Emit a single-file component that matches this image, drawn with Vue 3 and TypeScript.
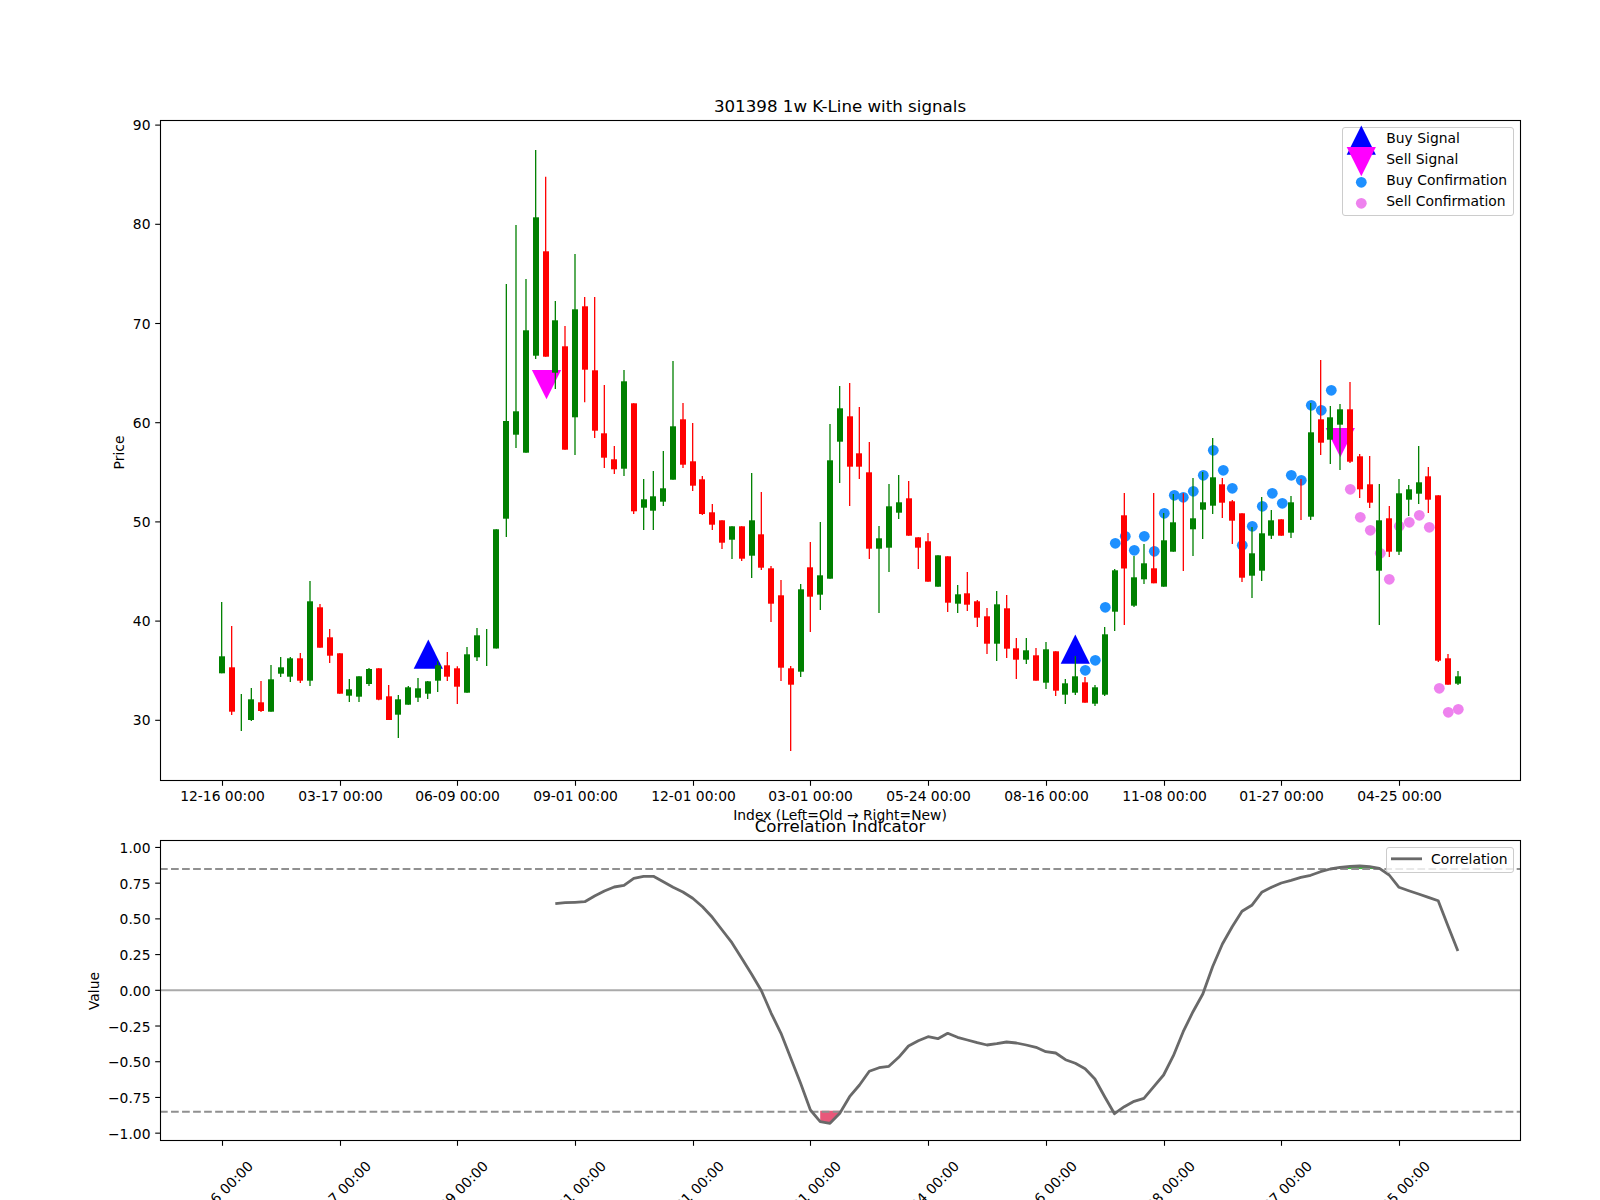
<script setup lang="ts">
type Candle = [string, number, number, number, number]

// colour, wick top, body top, body bottom, wick bottom (image pixels)
const raw: Candle[] = [
  ['g',602,656.3,673.3,673.3],['r',626,667.3,711.7,715],['g',694,0,0,731],['g',688,699.3,720,721],
  ['r',681,702.3,711,712],['g',665,679.3,711.7,711.7],['g',657,667.3,673.7,677],['g',657,658.3,676.7,682],
  ['r',653,658.3,680.7,683],['g',581,601.3,680.7,686],['r',604,607.3,647.7,647.7],['r',629,637.3,655.7,663],
  ['r',653.3,653.3,693.7,693.7],['g',679,689.3,695.7,702],['g',676.3,676.3,696.7,702],['g',668,669,684,686],
  ['r',668.3,668.3,699.7,700.3],['r',685,696.3,720,720],['g',695,699.3,714.7,738],['g',686,687.3,704.7,704.7],
  ['g',678,688.3,697.7,702],['g',681,681.3,693.7,699],['g',661.3,665.3,680.7,692],['r',652,665.3,676.7,681],
  ['r',666.3,668.3,686.7,704],['g',647,654.3,692.7,692.7],['g',628,635.3,657.3,661],['g',629,0,0,666],
  ['g',529.3,529.3,648.5,648.5],['g',284,421,518.7,537],['g',225,411.3,434.7,448],['g',279,330.3,452.7,452.7],
  ['g',150,217.3,355.7,359],['r',176.7,251.3,356.7,356.7],['g',301,320.3,372.7,389],['r',326,346.3,449.7,449.7],
  ['g',254,309.3,417.3,455],['r',297,306.3,369.7,402.3],['r',297,370.3,430.7,438],['r',385,433.3,457.7,468],
  ['r',446,459.3,469.3,474],['g',370,381.3,468.7,476],['r',403.3,403.3,511.3,514],['g',479,499.3,507.7,530],
  ['g',471,496.3,510.7,530],['g',451,488.3,501.7,506],['g',361,426.3,479.7,479.7],['r',403,419.3,464.7,468],
  ['r',423,461.3,485.7,491],['r',476,479.3,514,515],['r',504,512.3,524.7,530],['r',520.3,520.3,542.7,549],
  ['g',526.3,526.3,539.7,559],['r',526.3,526.3,558.7,561],['g',473,520.3,555.7,578],['r',492,534.3,567.7,570],
  ['r',566,568.3,603.7,622],['r',580,595.3,667.7,681],['r',666,668.3,684.7,751],['g',584,589.3,671.7,677],
  ['r',542,567.3,596.7,632],['g',522,575.3,594.7,610],['g',424,460.3,578.7,578.7],['g',386,408.3,441.7,483],
  ['r',383,416.3,466.7,506],['r',407,453.3,466.7,479],['r',442,472.3,548.7,559],['g',526,538.3,548.7,613],
  ['g',484,506.3,547.7,572],['g',475,502.3,512.7,519],['r',481,498.3,535.7,535.7],['r',537.3,537.3,547.7,569],
  ['r',533,541.3,581.7,581.7],['g',555.3,555.3,586.7,586.7],['r',556.3,556.3,602.7,612],['g',585,594.3,603.7,613],
  ['r',572,593.3,604.7,611],['r',600,601.3,617.7,627],['r',608,616.3,643.7,654],['g',591,604.3,643.7,661],
  ['r',595,608.3,648.7,658],['r',638,648.3,659.7,679],['g',638,650.3,659.7,664],['r',648,655.3,680.7,680.7],
  ['g',642,649.3,682.7,689],['r',651.3,651.3,690.7,696],['g',679,683.3,694.7,704],['g',656,676.3,692.7,695],
  ['r',677,682.3,702.7,702.7],['g',685,687.3,703.7,706],['g',627,634.3,694.7,696],['g',569,570.3,611.7,631],
  ['r',493,515.3,568.5,625],['g',556,577.3,605.7,607],['g',544,563.3,579.3,584],['r',493,568.3,583.3,583.3],
  ['g',513,540.3,586.7,586.7],['g',494,522.3,551.7,551.7],['r',493.3,0,0,571],['g',478,518.3,529.3,556],
  ['g',472,502.3,509.7,539],['g',438,477.3,505.7,514],['r',478,484.3,502.7,518],['r',500,501.3,520.7,544],
  ['r',513.3,513.3,577.7,582],['g',527,553.3,575.7,598],['g',497,533.3,570.7,581],['g',510,520.3,535.7,539],
  ['r',519.3,519.3,535.7,535.7],['g',496,502.3,532.7,538],['r',479,0,0,520],['g',403,432.3,516.7,520],
  ['r',360,419.3,442.7,455],['g',406,417.3,439.7,464],['g',404,409.3,424.7,470],['r',382,409.3,461.7,463],
  ['r',454,456.3,489.3,498],['r',456,484.3,502.7,508],['g',484,520.3,570.7,625],['r',506,518.3,551.7,557],
  ['g',479,493.3,551.7,555],['g',485,489.3,499.7,516],['g',446,482.3,493.7,504],['r',467,476.3,499.7,513],
  ['r',495.3,495.3,660.7,662],['r',654,658.3,684.7,684.7],['g',671,676.3,683.7,685],
]

const X0 = 221.8
const STEP = 9.81
const xAt = (i: number) => X0 + STEP * i

const candles = raw.map((c, i) => {
  const x = xAt(i)
  return {
    key: i,
    cls: c[0] === 'g' ? 'up' : 'down',
    wx: Math.round(x * 3) / 3,
    top: c[1],
    bottom: c[4],
    hasBody: c[3] > c[2],
    bx: Math.round(x - 3),
    by: c[2],
    bh: c[3] - c[2],
  }
})

const blueDots: [number, number][] = [
  [1085.3,670.3],[1095.3,660.3],[1105.3,607.3],[1115.3,543.3],[1125.3,536.3],[1134.3,550.3],[1144.3,536.3],
  [1154.3,551.3],[1164.3,513.3],[1174.3,495.3],[1183.3,497.3],[1193.3,491.3],[1203.3,475.3],[1213.3,450.3],
  [1223.3,470.3],[1232.3,488.3],[1242.3,545.3],[1252.3,526.3],[1262.3,506.3],[1272.3,493.3],[1282.3,503.3],
  [1291.3,475.3],[1301.3,480.3],[1311.3,405.3],[1321.3,410.3],[1331.3,390.3],
]
const pinkDots: [number, number][] = [
  [1350.3,489.3],[1360.3,517.3],[1370.3,530.3],[1380.3,553.3],[1389.3,579.3],[1399.3,526.3],[1409.3,522.3],
  [1419.3,515.3],[1429.3,527.3],[1439.3,688.3],[1448.3,712.3],[1458.3,709.3],
]

const HALF = 14.6
const HEIGHT = 29.2
const up = (x: number, base: number) => `${x - HALF},${base} ${x + HALF},${base} ${x},${base - HEIGHT}`
const down = (x: number, top: number) => `${x - HALF},${top} ${x + HALF},${top} ${x},${top + HEIGHT}`

const buySignals = [up(428.3, 668.8), up(1075.3, 663.8)]
const sellSignals = [down(546.5, 370), down(1340.3, 428)]

// correlation line, from candle 34 onward (offset of y from 770, times 3)
const corrRaw = [
  401,398,397,395,378,363,351,346,325,319,319,335,352,366,385,410,442,480,518,565,612,662,730,790,865,940,
  1020,1055,1060,1030,980,945,904,893,889,862,828,812,800,806,790,802,810,818,825,821,816,819,825,832,845,849,
  869,880,896,927,980,1031,1010,994,985,950,915,857,785,725,672,590,522,470,424,406,367,352,339,331,322,316,
  305,297,292,289,288,290,295,315,352,362,372,382,392,468,543,
]
const corrPts = corrRaw.map((d, k) => [xAt(k + 34), 770 + d / 3] as [number, number])
const corrLine = corrPts.map((p) => `${p[0].toFixed(1)},${p[1].toFixed(1)}`).join(' ')

const Y_HI = 868.9
const Y_LO = 1111.7
const lowFill = `${xAt(61)},${Y_LO - 1} ${xAt(63.3)},${Y_LO - 1} ${corrPts[29][0]},${corrPts[29][1]} ${corrPts[28][0]},${corrPts[28][1]} ${corrPts[27][0]},${corrPts[27][1]}`
const highFill = `${xAt(113)},${Y_HI} ${xAt(118)},${Y_HI} ${corrPts[83][0]},${corrPts[83][1]} ${corrPts[82][0]},${corrPts[82][1]} ${corrPts[81][0]},${corrPts[81][1]} ${corrPts[80][0]},${corrPts[80][1]}`

const tickLabels = [
  '12-16 00:00','03-17 00:00','06-09 00:00','09-01 00:00','12-01 00:00','03-01 00:00',
  '05-24 00:00','08-16 00:00','11-08 00:00','01-27 00:00','04-25 00:00',
]
const xTicks = tickLabels.map((label, i) => ({ label, x: Math.round(xAt(i * 12)) + 0.5 }))

const priceTicks = [90, 80, 70, 60, 50, 40, 30].map((v) => ({
  label: String(v),
  y: 720.3 - 9.92 * (v - 30),
}))
const valueTicks = [1, 0.75, 0.5, 0.25, 0, -0.25, -0.5, -0.75, -1].map((v) => ({
  label: (v < 0 ? '\u2212' : '') + Math.abs(v).toFixed(2),
  y: 990.3 - 142.86 * v,
}))
</script>

<template>
  <svg class="figure" width="1600" height="1200" viewBox="0 0 1600 1200" xmlns="http://www.w3.org/2000/svg">
    <!-- price panel -->
    <polygon v-for="(p, i) in buySignals" :key="'b' + i" class="buy" :points="p" />
    <polygon v-for="(p, i) in sellSignals" :key="'s' + i" class="sell" :points="p" />
    <circle v-for="(d, i) in blueDots" :key="'bd' + i" class="blue" :cx="d[0]" :cy="d[1]" r="5.4" />
    <circle v-for="(d, i) in pinkDots" :key="'pd' + i" class="pink" :cx="d[0]" :cy="d[1]" r="5.4" />
    <g v-for="c in candles" :key="c.key" :class="c.cls">
      <line class="wick" :x1="c.wx" :x2="c.wx" :y1="c.top" :y2="c.bottom" />
      <rect v-if="c.hasBody" class="body" :x="c.bx" :y="c.by" width="6" :height="c.bh" />
    </g>
    <rect class="frame" x="160.5" y="120.5" width="1360" height="660" />
    <g v-for="t in priceTicks" :key="'p' + t.label">
      <line class="tick" x1="155.2" x2="160" :y1="t.y" :y2="t.y" />
      <text class="label end" x="150.5" :y="t.y + 5">{{ t.label }}</text>
    </g>
    <g v-for="t in xTicks" :key="'x' + t.label">
      <line class="tick" :x1="t.x" :x2="t.x" y1="781" y2="785.8" />
      <text class="label mid" :x="t.x" y="800.5">{{ t.label }}</text>
    </g>
    <text class="title mid" x="840" y="112">301398 1w K-Line with signals</text>
    <text class="label mid" x="840" y="820">Index (Left=Old → Right=New)</text>
    <text class="label mid" transform="translate(124 452.5) rotate(-90)">Price</text>

    <rect class="legend-box" x="1342.5" y="127.5" width="171" height="88" rx="2.5" />
    <polygon class="buy" points="1346.7,154.8 1375.9,154.8 1361.3,125.6" />
    <polygon class="sell" points="1346.7,147 1375.9,147 1361.3,176.2" />
    <circle class="blue" cx="1361.3" cy="182.3" r="5.4" />
    <circle class="pink" cx="1361.3" cy="203.3" r="5.4" />
    <text class="label" x="1386.3" y="143">Buy Signal</text>
    <text class="label" x="1386.3" y="164">Sell Signal</text>
    <text class="label" x="1386.3" y="185">Buy Confirmation</text>
    <text class="label" x="1386.3" y="206">Sell Confirmation</text>

    <!-- correlation panel -->
    <line class="zero" x1="160" x2="1520" y1="990.3" y2="990.3" />
    <polygon class="fill-low" :points="lowFill" />
    <polygon class="fill-high" :points="highFill" />
    <line class="dash" x1="160" x2="1520" :y1="Y_HI" :y2="Y_HI" />
    <line class="dash" x1="160" x2="1520" :y1="Y_LO" :y2="Y_LO" />
    <polyline class="corr" :points="corrLine" />
    <rect class="frame" x="160.5" y="840.5" width="1360" height="300" />
    <g v-for="t in valueTicks" :key="'v' + t.label">
      <line class="tick" x1="155.2" x2="160" :y1="t.y" :y2="t.y" />
      <text class="label end" x="150.5" :y="t.y + 5.5">{{ t.label }}</text>
    </g>
    <g v-for="t in xTicks" :key="'x2' + t.label">
      <line class="tick" :x1="t.x" :x2="t.x" y1="1141" y2="1145.8" />
      <text class="label mid" :transform="`translate(${t.x + 1.5} 1197) rotate(-45)`">{{ t.label }}</text>
    </g>
    <text class="title mid" x="840" y="832">Correlation Indicator</text>
    <text class="label mid" transform="translate(99 991) rotate(-90)">Value</text>

    <rect class="legend-box" x="1386.5" y="847.5" width="127" height="25" rx="2.5" />
    <line class="corr" x1="1391" x2="1422" y1="858.8" y2="858.8" />
    <text class="label" x="1431" y="863.5">Correlation</text>
  </svg>
</template>

<style scoped>
.figure {
  display: block;
  background: #ffffff;
}
.label,
.title {
  font-family: "DejaVu Sans", sans-serif;
  fill: #000000;
}
.label {
  font-size: 13.89px;
}
.title {
  font-size: 16.67px;
}
.end {
  text-anchor: end;
}
.mid {
  text-anchor: middle;
}
.frame {
  fill: none;
  stroke: #000000;
  stroke-width: 1.1;
}
.tick {
  stroke: #000000;
  stroke-width: 1.1;
}
.up .wick {
  stroke: #008000;
}
.down .wick {
  stroke: #ff0000;
}
.wick {
  stroke-width: 1.3;
}
.up .body {
  fill: #008000;
}
.down .body {
  fill: #ff0000;
}
.buy {
  fill: #0000ff;
}
.sell {
  fill: #ff00ff;
}
.blue {
  fill: #1e90ff;
}
.pink {
  fill: #ee82ee;
}
.legend-box {
  fill: #ffffff;
  fill-opacity: 0.8;
  stroke: #cccccc;
  stroke-width: 1;
}
.zero {
  stroke: #aaaaaa;
  stroke-width: 2;
}
.dash {
  stroke: #909090;
  stroke-width: 2;
  stroke-dasharray: 7.7 3.33;
}
.corr {
  fill: none;
  stroke: #696969;
  stroke-width: 2.8;
  stroke-linejoin: round;
}
.fill-low {
  fill: #e8587a;
}
.fill-high {
  fill: #32cd32;
}
</style>
